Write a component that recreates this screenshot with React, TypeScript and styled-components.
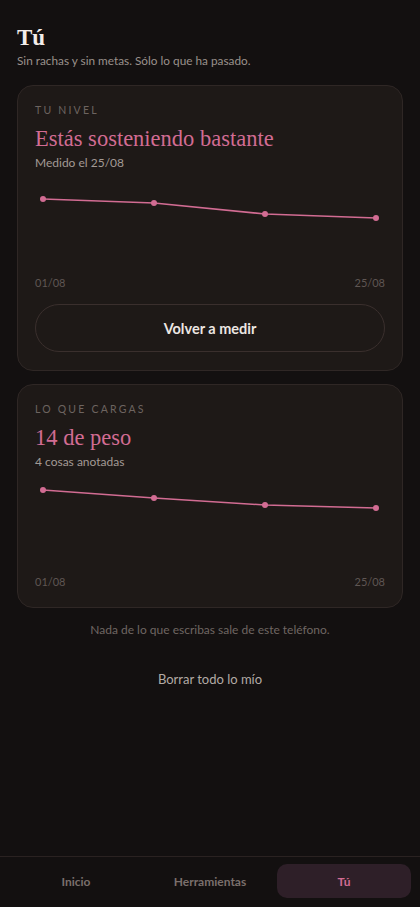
import React from "react";
import styled, { createGlobalStyle } from "styled-components";

const GlobalStyle = createGlobalStyle`
  * { box-sizing: border-box; }
  html, body { margin: 0; padding: 0; background: #131010; }
  body { font-family: "Lato", "Noto Sans", sans-serif; color: #e8e2de; }
  button { font-family: inherit; }
`;

const Page = styled.div`
  min-height: 100vh;
  display: flex;
  flex-direction: column;
  background: #131010;
`;

const Main = styled.main`
  flex: 1;
  display: flex;
  flex-direction: column;
  padding: 24px 17px 0;
`;

const Title = styled.h1`
  margin: 0;
  font-family: "Liberation Serif", "DejaVu Serif", serif;
  font-weight: 700;
  font-size: 23px;
  line-height: 28px;
  color: #f3ede9;
`;

const Subtitle = styled.p`
  margin: 1px 0 0;
  font-size: 11.8px;
  line-height: 16px;
  color: #9a918c;
`;

const Card = styled.section<{ $top: number }>`
  margin-top: ${(p) => p.$top}px;
  background: #1e1917;
  border: 1px solid #2f2725;
  border-radius: 16px;
  padding: 17px 17px 18px;
  display: flex;
  flex-direction: column;
`;

const Eyebrow = styled.div`
  font-size: 10.5px;
  line-height: 14px;
  letter-spacing: 2.2px;
  text-transform: uppercase;
  color: #6d6460;
`;

const Heading = styled.h2`
  margin: 8px 0 0;
  font-family: "Liberation Serif", "DejaVu Serif", serif;
  font-weight: 400;
  font-size: 22.5px;
  line-height: 28px;
  color: #d26c93;
`;

const Meta = styled.div`
  margin-top: 2px;
  font-size: 12px;
  line-height: 16px;
  color: #a39a95;
`;

const ChartBox = styled.svg`
  display: block;
  margin-top: 7px;
  width: 100%;
  height: 90px;
`;

const AxisRow = styled.div`
  margin-top: 8px;
  display: flex;
  justify-content: space-between;
  font-size: 11px;
  line-height: 14px;
  color: #5f5653;
`;

const PillButton = styled.button`
  margin-top: 14px;
  height: 48px;
  width: 100%;
  border-radius: 24px;
  border: 1px solid #3a2f2d;
  background: transparent;
  color: #ece6e2;
  font-size: 14.5px;
  font-weight: 700;
  cursor: pointer;
`;

const Note = styled.p`
  margin: 15px 0 0;
  text-align: center;
  font-size: 12px;
  line-height: 14px;
  color: #6f6662;
`;

const TextButton = styled.button`
  margin: 30px auto 0;
  background: none;
  border: none;
  padding: 4px 8px;
  font-size: 13px;
  line-height: 16px;
  color: #b2aaa5;
  cursor: pointer;
`;

const Nav = styled.nav`
  display: grid;
  grid-template-columns: repeat(3, 1fr);
  padding: 7px 9px 9px;
  border-top: 1px solid #2a2221;
  background: #131010;
`;

const Tab = styled.button<{ $active?: boolean }>`
  height: 34px;
  border: none;
  border-radius: 10px;
  background: ${(p) => (p.$active ? "#2e1f28" : "transparent")};
  color: ${(p) => (p.$active ? "#d26c93" : "#7a6f6c")};
  font-size: 12px;
  font-weight: 700;
  cursor: pointer;
`;

type ChartProps = { ys: number[] };

const Chart: React.FC<ChartProps> = ({ ys }) => {
  const xs = [8, 119, 230, 341];
  const pts = ys.map((y, i) => `${xs[i]},${y}`).join(" ");
  return (
    <ChartBox viewBox="0 0 350 90" preserveAspectRatio="none">
      <polyline points={pts} fill="none" stroke="#d26c93" strokeWidth={1.6} strokeLinejoin="round" />
      {ys.map((y, i) => (
        <circle key={i} cx={xs[i]} cy={y} r={3} fill="#d26c93" />
      ))}
    </ChartBox>
  );
};

export default function App() {
  return (
    <Page>
      <GlobalStyle />
      <Main>
        <Title>Tú</Title>
        <Subtitle>Sin rachas y sin metas. Sólo lo que ha pasado.</Subtitle>

        <Card $top={16}>
          <Eyebrow>Tu nivel</Eyebrow>
          <Heading>Estás sosteniendo bastante</Heading>
          <Meta>Medido el 25/08</Meta>
          <Chart ys={[21, 25, 36, 40]} />
          <AxisRow>
            <span>01/08</span>
            <span>25/08</span>
          </AxisRow>
          <PillButton>Volver a medir</PillButton>
        </Card>

        <Card $top={13}>
          <Eyebrow>Lo que cargas</Eyebrow>
          <Heading>14 de peso</Heading>
          <Meta>4 cosas anotadas</Meta>
          <Chart ys={[13, 21, 28, 31]} />
          <AxisRow>
            <span>01/08</span>
            <span>25/08</span>
          </AxisRow>
        </Card>

        <Note>Nada de lo que escribas sale de este teléfono.</Note>
        <TextButton>Borrar todo lo mío</TextButton>
      </Main>
      <Nav>
        <Tab>Inicio</Tab>
        <Tab>Herramientas</Tab>
        <Tab $active>Tú</Tab>
      </Nav>
    </Page>
  );
}
